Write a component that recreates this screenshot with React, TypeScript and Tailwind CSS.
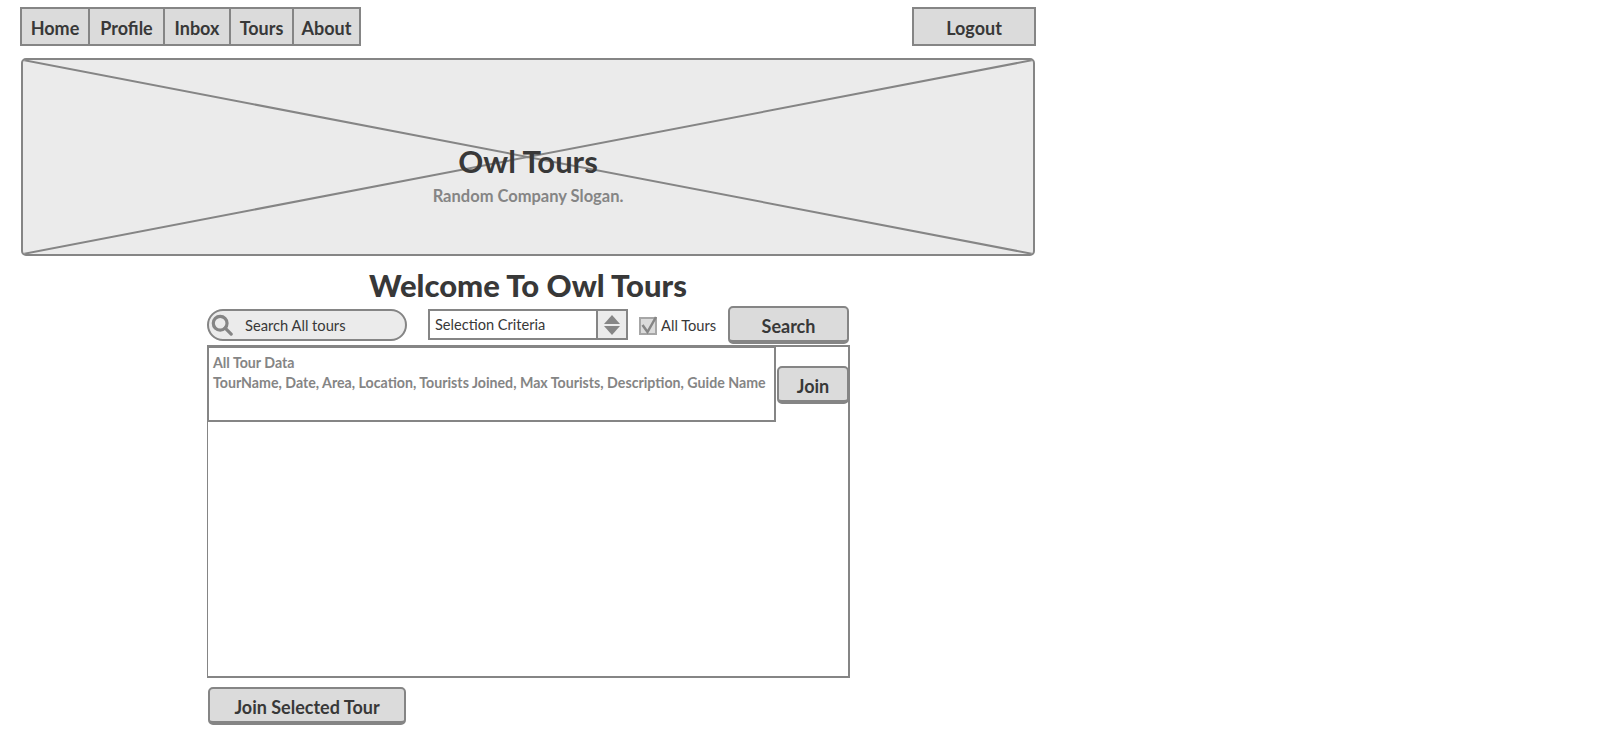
const navItems = [
  { label: 'Home', width: 'w-[66px]' },
  { label: 'Profile', width: 'w-[75px]' },
  { label: 'Inbox', width: 'w-[66px]' },
  { label: 'Tours', width: 'w-[63px]' },
  { label: 'About', width: 'w-[67px]' },
];

function RaisedButton({ label, className }: { label: string; className: string }) {
  return (
    <button
      className={`flex items-center justify-center rounded-[5px] border-2 border-b-[4px] border-[#858585] bg-[#dbdbdb] pt-[5px] text-[18px] font-bold text-[#383838] ${className}`}
    >
      {label}
    </button>
  );
}

export default function App() {
  return (
    <div className="h-[747px] w-[1600px] overflow-hidden bg-white font-['Lato',sans-serif] text-[#383838]">
      {/* Top nav */}
      <div className="ml-5 mt-[7px] flex h-[39px] w-[1016px] justify-between">
        <div className="flex border-2 border-[#858585] bg-[#dbdbdb]">
          {navItems.map((item, i) => (
            <div
              key={item.label}
              className={`flex items-center justify-center pt-[3px] text-[18px] font-bold ${item.width} ${i > 0 ? 'border-l-2 border-[#858585]' : ''}`}
            >
              {item.label}
            </div>
          ))}
        </div>
        <div className="flex w-[124px] items-center justify-center border-2 border-[#858585] bg-[#dbdbdb] pt-[3px] text-[18px] font-bold">
          Logout
        </div>
      </div>

      {/* Hero placeholder */}
      <div className="relative ml-[21px] mt-3 flex h-[198px] w-[1014px] flex-col items-center overflow-hidden rounded-[5px] border-2 border-[#858585] bg-[#ebebeb]">
        <svg className="absolute inset-0 h-full w-full" viewBox="0 0 1010 194" preserveAspectRatio="none">
          <path d="M0 0L1010 194M1010 0L0 194" stroke="#858585" strokeWidth="2" fill="none" />
        </svg>
        <div className="relative mt-[81px] text-[31px] font-bold leading-[40px]">Owl Tours</div>
        <div className="relative mt-[4px] text-[16.5px] font-bold leading-[22px] text-[#858585]">Random Company Slogan.</div>
      </div>

      <div className="ml-[207px] w-[643px]">
        <h1 className="mt-[9px] pr-px text-center text-[31px] font-black leading-[41px]">Welcome To Owl Tours</h1>

        {/* Search row */}
        <div className="mt-[3px] flex h-[36px] items-start pr-px">
          <div className="flex h-[32px] w-[200px] items-center rounded-full border-2 border-[#858585] bg-[#ebebeb]">
            <svg className="ml-[2px] h-[22px] w-[22px]" viewBox="0 0 24 24" fill="none" stroke="#858585" strokeWidth="3.5">
              <circle cx="10" cy="10" r="7.5" />
              <path d="M15.5 15.5l6.5 6.5" strokeLinecap="round" />
            </svg>
            <span className="ml-[12px] pt-[1px] text-[14.7px]">Search All tours</span>
          </div>
          <div className="ml-[21px] flex h-[31px] w-[200px] border-2 border-[#858585] bg-white">
            <span className="flex w-[166px] items-center pl-[5px] pt-[1px] text-[14.6px]">Selection Criteria</span>
            <div className="flex w-[30px] flex-col items-center justify-center gap-[2px] border-l-2 border-[#858585] bg-[#ebebeb]">
              <div className="h-0 w-0 border-x-[8px] border-b-[9px] border-x-transparent border-b-[#858585]" />
              <div className="h-0 w-0 border-x-[8px] border-t-[9px] border-x-transparent border-t-[#858585]" />
            </div>
          </div>
          <div className="relative ml-[11px] mt-[8px] h-[18px] w-[18px] border-2 border-[#a6a6a6] bg-[#dbdbdb]">
            <svg className="absolute left-0 top-[-3px] h-[19px] w-[18px]" viewBox="0 0 18 19" fill="none" stroke="#858585" strokeWidth="2.5">
              <path d="M1.5 9l5 7L15 1" />
            </svg>
          </div>
          <span className="ml-1 mt-[6px] text-[14.7px] leading-[20px]">All Tours</span>
          <RaisedButton label="Search" className="ml-auto mt-[-3px] h-[38px] w-[121px]" />
        </div>

        {/* Tour list */}
        <div className="flex h-[333px] items-start border-2 border-l border-[#858585]">
          <div className="h-[75px] w-[568px] border-2 border-l-[1px] border-t-[1px] border-[#858585] px-[4px] pt-[5px] text-[14.2px] font-bold leading-[20px] text-[#858585]">
            <div>All Tour Data</div>
            <div className="whitespace-nowrap">TourName, Date, Area, Location, Tourists Joined, Max Tourists, Description, Guide Name</div>
          </div>
          <RaisedButton label="Join" className="ml-[1px] mr-[-2px] mt-[19px] h-[38px] w-[72px]" />
        </div>

        <RaisedButton label="Join Selected Tour" className="ml-px mt-[9px] h-[38px] w-[198px]" />
      </div>
    </div>
  );
}
